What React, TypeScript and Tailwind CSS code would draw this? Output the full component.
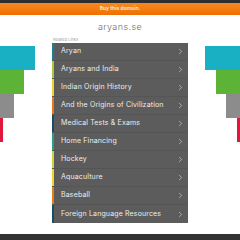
import { ChevronRight } from "lucide-react";

const links = [
  { label: "Aryan", color: "bg-[#1b7f8f]" },
  { label: "Aryans and India", color: "bg-[#a9c83a]" },
  { label: "Indian Origin History", color: "bg-[#f0d230]" },
  { label: "And the Origins of Civilization", color: "bg-[#e9761c]" },
  { label: "Medical Tests & Exams", color: "bg-[#174d66]" },
  { label: "Home Financing", color: "bg-[#2a9c8a]" },
  { label: "Hockey", color: "bg-[#c3d843]" },
  { label: "Aquaculture", color: "bg-[#f1d42f]" },
  { label: "Baseball", color: "bg-[#ea7a1c]" },
  { label: "Foreign Language Resources", color: "bg-[#184d66]" },
];

// decorative side bars
const bars = [
  { w: "w-[35px]", color: "bg-[#1ab0c4]" },
  { w: "w-[24px]", color: "bg-[#5cb335]" },
  { w: "w-[14px]", color: "bg-[#8c8c8c]" },
  { w: "w-[3px]", color: "bg-[#e0173c]" },
];

export default function App() {
  return (
    <div className="w-[240px] h-[240px] bg-white flex flex-col overflow-hidden" style={{ fontFamily: "Inter, 'Noto Sans', sans-serif" }}>
      <div className="h-[3px] bg-[#2e2e2e]" />
      <div className="h-[12px] bg-gradient-to-b from-[#f68a1e] to-[#ef6f00] flex items-center justify-center text-[5px] font-bold text-[#fde3c4]">
        Buy this domain.
      </div>
      <div className="h-[22px] flex items-center justify-center pt-[1px] text-[9px] text-[#707070] font-light tracking-[0.4px]">
        aryans.se
      </div>

      <div className="flex flex-1">
        {/* left bars */}
        <div className="w-[52px] flex flex-col items-start pt-[9px]">
          {bars.map((b, i) => (
            <div key={i} className={`${b.w} h-[24px] ${b.color}`} />
          ))}
        </div>

        <div className="w-[136px] flex flex-col">
          <div className="h-[6px] text-[4px] leading-[6px] text-[#a0a0a0] pl-[1px]">Related Links</div>
          <div className="flex flex-col bg-[#5c5c5c]">
            {links.map((l) => (
              <div key={l.label} className="h-[18px] flex items-center border-b border-[#555555] last:border-b-0">
                <div className={`w-[2px] h-full ${l.color}`} />
                <div className="flex-1 pl-[7px] text-[7px] tracking-[0.15px] text-[#ececec] whitespace-nowrap">{l.label}</div>
                <ChevronRight className="w-[9px] h-[9px] mr-[3px] text-[#e0e0e0]" strokeWidth={1.5} />
              </div>
            ))}
          </div>
        </div>

        {/* right bars */}
        <div className="w-[52px] flex flex-col items-end pt-[9px]">
          {bars.map((b, i) => (
            <div key={i} className={`${b.w} h-[24px] ${b.color}`} />
          ))}
        </div>
      </div>

      <div className="h-[6px] bg-[#333333]" />
    </div>
  );
}
